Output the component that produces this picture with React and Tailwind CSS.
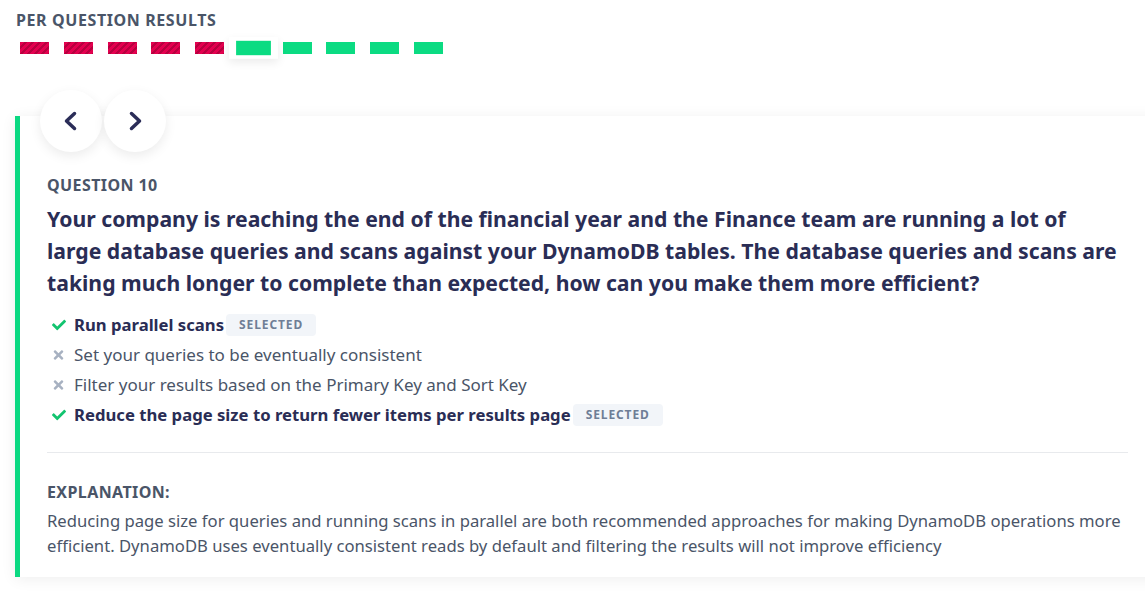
import React from "react";

const font = { fontFamily: '"Noto Sans", "Open Sans", sans-serif' };

function Bar({ kind, selected }) {
  const base =
    kind === "red"
      ? "bg-[repeating-linear-gradient(135deg,#e3004f_0px,#e3004f_3px,#b8003f_3px,#b8003f_5px)]"
      : "bg-[#0bdb82]";
  if (selected) {
    return (
      <div className="relative scale-[1.2]">
        <span className="absolute -inset-x-[6px] -inset-y-[3px] bg-white shadow-[0_3px_8px_rgba(0,0,0,0.08)]" />
        <div className={`relative w-[29px] h-3 ${base}`} />
      </div>
    );
  }
  return <div className={`w-[29px] h-3 ${base}`} />;
}

function Check() {
  return (
    <svg viewBox="0 0 512 512" className="w-[14px] h-[14px] text-[#12c46f]" fill="currentColor">
      <path d="M173.9 439.4l-166.4-166.4c-10-10-10-26.2 0-36.2l36.2-36.2c10-10 26.2-10 36.2 0L192 312.7 432.1 72.6c10-10 26.2-10 36.2 0l36.2 36.2c10 10 10 26.2 0 36.2l-294.4 294.4c-10 10-26.2 10-36.2 0z" />
    </svg>
  );
}

function Cross() {
  return (
    <svg viewBox="0 0 352 512" className="w-[11px] h-[14px] text-[#a7b1c1]" fill="currentColor">
      <path d="M242.7 256l100.1-100.1c12.3-12.3 12.3-32.2 0-44.5l-22.2-22.2c-12.3-12.3-32.2-12.3-44.5 0L176 189.3 75.9 89.2c-12.3-12.3-32.2-12.3-44.5 0L9.2 111.4c-12.3 12.3-12.3 32.2 0 44.5L109.3 256 9.2 356.1c-12.3 12.3-12.3 32.2 0 44.5l22.2 22.2c12.3 12.3 32.2 12.3 44.5 0L176 322.7l100.1 100.1c12.3 12.3 32.2 12.3 44.5 0l22.2-22.2c12.3-12.3 12.3-32.2 0-44.5L242.7 256z" />
    </svg>
  );
}

function Chevron({ dir }) {
  return (
    <svg viewBox="0 0 24 24" className="w-[24px] h-[24px]" fill="none" stroke="#2b2d58" strokeWidth="3.5" strokeLinecap="round" strokeLinejoin="round">
      {dir === "left" ? <path d="M15.5 4.5L7.5 12l8 7.5" /> : <path d="M8.5 4.5l8 7.5-8 7.5" />}
    </svg>
  );
}

function Badge() {
  return (
    <span className="ml-[2px] inline-flex items-center h-[22px] px-[13px] rounded-[4px] bg-[#f2f5f9] text-[12px] font-bold tracking-[0.9px] text-[#6f7e96]">
      SELECTED
    </span>
  );
}

export default function App() {
  const bars = ["red", "red", "red", "red", "red", "green", "green", "green", "green", "green"];
  return (
    <div className="w-[1145px] h-[602px] bg-white overflow-hidden" style={font}>
      <div className="pl-[16px] pt-[9px]">
        <div className="text-[16px] leading-[22px] font-bold tracking-[0.6px] text-[#4a5568]">PER QUESTION RESULTS</div>
        <div className="mt-[11px] ml-[4px] flex items-center gap-[14.75px]">
          {bars.map((b, i) => (
            <Bar key={i} kind={b} selected={i === 5} />
          ))}
        </div>
      </div>

      <div className="flow-root mt-[62px] ml-[15px] w-[1150px] border-l-[5px] border-[#0bd982] bg-white shadow-[0_2px_14px_rgba(0,0,0,0.07)] pb-[19px]">
        <div className="-mt-[26px] ml-[20px] flex gap-[2px]">
          <button className="w-[62px] h-[62px] rounded-full bg-white shadow-[0_4px_12px_rgba(0,0,0,0.08)] flex items-center justify-center">
            <Chevron dir="left" />
          </button>
          <button className="w-[62px] h-[62px] rounded-full bg-white shadow-[0_4px_12px_rgba(0,0,0,0.08)] flex items-center justify-center">
            <Chevron dir="right" />
          </button>
        </div>

        <div className="pl-[27px] pr-[37px]">
          <div className="mt-[22px] text-[16px] leading-[22px] font-bold tracking-[0.4px] text-[#4a5568]">QUESTION 10</div>
          <div className="mt-[7px] text-[21.2px] leading-[32px] font-bold text-[#2a2d55]">
            Your company is reaching the end of the financial year and the Finance team are running a lot of
            <br />
            large database queries and scans against your DynamoDB tables. The database queries and scans are
            <br />
            taking much longer to complete than expected, how can you make them more efficient?
          </div>

          <div className="mt-[11px] flex flex-col">
            <div className="h-[30px] flex items-center">
              <span className="w-[27px] pl-[5px] flex items-center"><Check /></span>
              <span className="text-[16.7px] font-bold text-[#2a2d55]">Run parallel scans</span>
              <Badge />
            </div>
            <div className="h-[30px] flex items-center">
              <span className="w-[27px] pl-[6px] flex items-center"><Cross /></span>
              <span className="text-[17px] text-[#4a5568]">Set your queries to be eventually consistent</span>
            </div>
            <div className="h-[30px] flex items-center">
              <span className="w-[27px] pl-[6px] flex items-center"><Cross /></span>
              <span className="text-[17px] text-[#4a5568]">Filter your results based on the Primary Key and Sort Key</span>
            </div>
            <div className="h-[30px] flex items-center">
              <span className="w-[27px] pl-[5px] flex items-center"><Check /></span>
              <span className="text-[16.7px] font-bold text-[#2a2d55]">Reduce the page size to return fewer items per results page</span>
              <Badge />
            </div>
          </div>

          <div className="mt-[22px] border-t border-[#e8eaed]" />

          <div className="mt-[28px] text-[16px] leading-[22px] font-bold tracking-[0.4px] text-[#4a5568]">EXPLANATION:</div>
          <div className="mt-[5px] text-[16.67px] leading-[25px] text-[#4a5568]">
            Reducing page size for queries and running scans in parallel are both recommended approaches for making DynamoDB operations more efficient. DynamoDB uses eventually consistent reads by default and filtering the results will not improve efficiency
          </div>
        </div>
      </div>
    </div>
  );
}
